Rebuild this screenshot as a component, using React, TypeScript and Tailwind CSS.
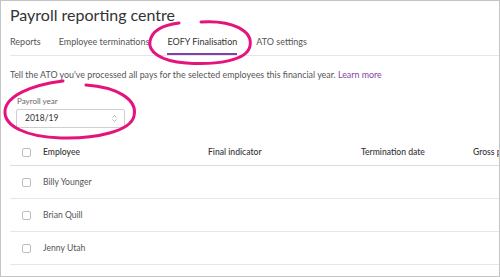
import { ChevronsUpDown } from "lucide-react";

const tabs = ["Reports", "Employee terminations", "EOFY Finalisation", "ATO settings"];
const employees = ["Billy Younger", "Brian Quill", "Jenny Utah"];

const Checkbox = () => (
  <div className="w-[9px] h-[9px] rounded-[2px] border border-[#bdbdbd] bg-white" />
);

export default function App() {
  return (
    <div
      className="relative w-[500px] h-[277px] overflow-hidden bg-white border border-[#c4c4c4] text-[#444]"
      style={{ fontFamily: "Lato, 'Liberation Sans', sans-serif" }}
    >
      <div className="pl-[9px]">
        <h1 className="pt-[3px] h-[28px] text-[16px] leading-[22px] text-[#333]">
          Payroll reporting centre
        </h1>

        <div className="flex h-[27px] border-b border-[#e6e6e6] text-[9px] text-[#555]">
          {tabs.map((t, i) => (
            <div
              key={t}
              className={
                i === 2
                  ? "flex items-center h-full mr-[19px] border-b-2 border-[#8241aa] pt-[2px] text-[#333]"
                  : "flex items-center h-full mr-[18px]"
              }
            >
              {t}
            </div>
          ))}
        </div>

        <p className="mt-[13px] h-[12px] text-[8.9px] leading-[12px] text-[#555]">
          Tell the ATO you've processed all pays for the selected employees this financial year.{" "}
          <span className="text-[#8241aa]">Learn more</span>
        </p>

        <div className="mt-[15px] pl-[7px] text-[8px] leading-[10px] text-[#666]">Payroll year</div>
        <div className="mt-[3px] ml-[6px] w-[109px] h-[19px] flex items-center justify-between border border-[#cfcfcf] rounded-[2px] pl-[8px] pr-[5px] text-[8.5px] text-[#333]">
          <span>2018/19</span>
          <ChevronsUpDown size={9} strokeWidth={1.5} className="text-[#888]" />
        </div>

        <div className="mt-[12px] text-[8.6px]">
          <div className="grid grid-cols-[33px_165px_153px_112px_1fr] items-center h-[26px] border-b border-[#dcdcdc] text-[#333] font-medium whitespace-nowrap">
            <div className="pl-[12px]"><Checkbox /></div>
            <div>Employee</div>
            <div>Final indicator</div>
            <div>Termination date</div>
            <div>Gross pay</div>
          </div>
          {employees.map((e) => (
            <div
              key={e}
              className="grid grid-cols-[33px_165px_153px_112px_1fr] items-center h-[33px] border-b border-[#e6e6e6] text-[#555]"
            >
              <div className="pl-[12px]"><Checkbox /></div>
              <div>{e}</div>
              <div />
              <div />
              <div />
            </div>
          ))}
        </div>
      </div>

      <svg
        className="absolute left-0 top-0 pointer-events-none"
        width="500"
        height="277"
        viewBox="0 0 500 277"
        fill="none"
        stroke="#e5147c"
        strokeWidth="3"
        strokeLinecap="round"
      >
        <path d="M200 21 C232 19 252 30 249 45 C246 60 215 64 185 62 C158 60 147 50 149 40 C151 30 162 24 178 22" />
        <path d="M85 84 C115 86 137 98 133 115 C130 130 95 138 60 137 C25 136 3 125 4 110 C5 95 30 84 62 80" />
      </svg>
    </div>
  );
}
